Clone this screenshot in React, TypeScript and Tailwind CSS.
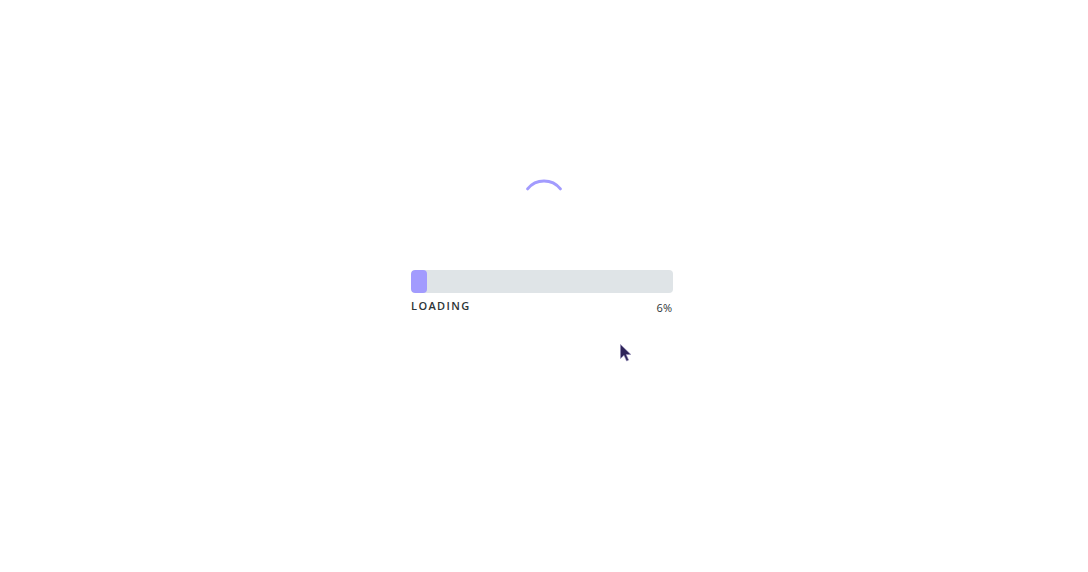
import React from 'react'

const font = { fontFamily: '"Open Sans", "Liberation Sans", sans-serif' }

function Spinner() {
  // arc of a 21px circle, top part only
  return (
    <svg width="48" height="48" viewBox="0 0 48 48" className="block">
      <path
        d="M 7.6 10.9 A 21 21 0 0 1 40.4 10.9"
        fill="none"
        stroke="#a29bfe"
        strokeWidth="3"
        strokeLinecap="round"
      />
    </svg>
  )
}

function Cursor() {
  return (
    <svg width="14" height="20" viewBox="0 0 14 20" className="absolute left-[619px] top-[343px]">
      <path d="M1.5 1.5 L1.5 15.5 L5 12.3 L7.6 18 L9.6 17.1 L7.1 11.6 L11.8 11.4 Z" fill="#2e2459" stroke="#8f88b3" strokeWidth="0.6" />
    </svg>
  )
}

export default function App() {
  const progress = 6

  return (
    <div className="relative h-[572px] w-full bg-white" style={font}>
      <div className="flex flex-col items-center pt-[178px] pr-[4px]">
        <div className="pl-[3px]">
          <Spinner />
        </div>
        <div className="mt-[44px] w-[262px]">
          <div className="h-[23px] w-full rounded-[4px] bg-[#dfe4e7] overflow-hidden">
            <div className="h-full w-[16px] rounded-[4px] bg-[#a29bfe]" />
          </div>
          <div className="mt-[5px] flex justify-between text-[#2d3436]">
            <span className="text-[11px] font-semibold tracking-[1.4px] leading-[16px]">LOADING</span>
            <span className="mt-[2px] pr-[1px] text-[11px] font-medium leading-[16px]">{progress}%</span>
          </div>
        </div>
      </div>
      <Cursor />
    </div>
  )
}
